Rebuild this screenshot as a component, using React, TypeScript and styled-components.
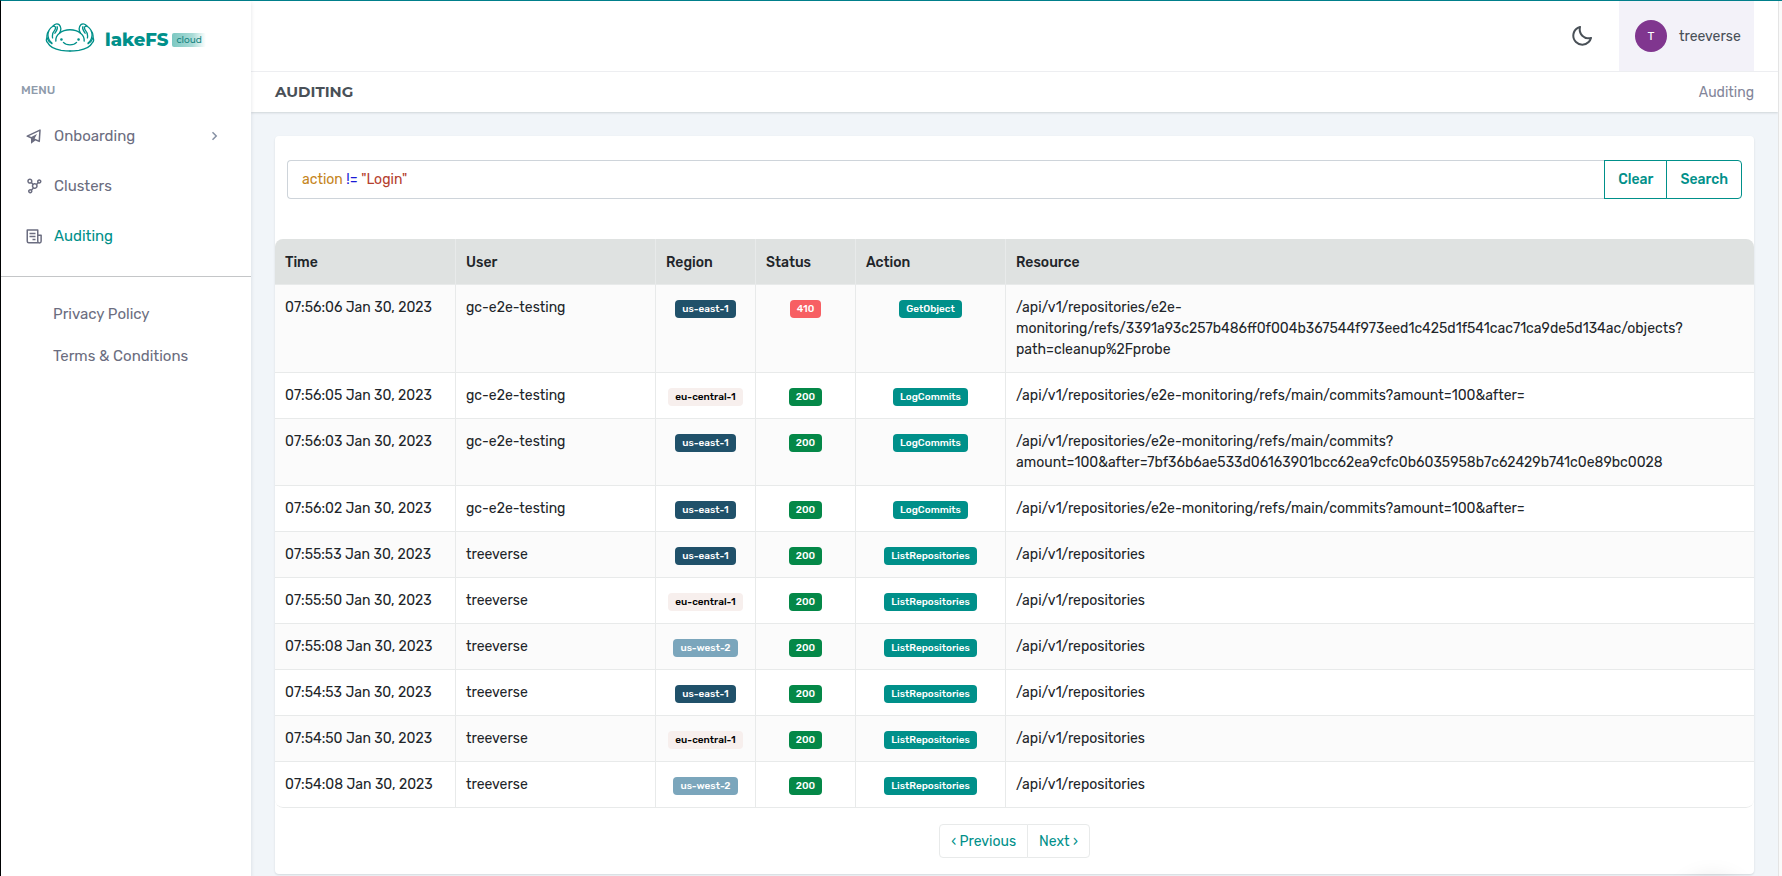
import React, { useState } from "react";
import styled, { createGlobalStyle } from "styled-components";
import { BiChevronRight, BiMoon, BiNetworkChart, BiPaperPlane } from "react-icons/bi";

const teal = "#00908a";
const line = "#e8eaea";
const bodyFont = `Rubik, Roboto, "Liberation Sans", sans-serif`;
const displayFont = `Montserrat, Inter, "Liberation Sans", sans-serif`;

const GlobalStyle = createGlobalStyle`
  *, *::before, *::after { box-sizing: border-box; }
  body {
    margin: 0;
    background: #f1f5f9;
    color: #212529;
    font: 400 14px/21px ${bodyFont};
  }
  button, input { font: inherit; }
  a { text-decoration: none; }
`;

const Shell = styled.div`
  display: grid;
  grid-template-columns: 250px minmax(0, 1fr) 4px;
  min-height: 100vh;
  border-top: 1px solid #007f8b;
  border-left: 1px solid #000;
`;

const Sidebar = styled.aside`
  position: relative;
  z-index: 1;
  background: #fff;
  box-shadow: 0 2px 4px rgba(15, 34, 58, 0.12);
`;

const Brand = styled.a`
  display: flex;
  align-items: center;
  height: 70px;
  padding: 2px 0 0 44px;
  color: ${teal};
`;

const BrandText = styled.span`
  display: flex;
  align-items: center;
  gap: 4px;
  padding: 5px 0 0 10px;
`;

const BrandName = styled.span`
  font: 800 18px/24px ${displayFont};
`;

const BrandTag = styled.span`
  padding: 0 4px;
  border-radius: 2px;
  background: linear-gradient(90deg, #7cc8c2, #a9dbd7 60%, #fff);
  color: #14837f;
  font: 500 9px/14px ${displayFont};
`;

const MenuTitle = styled.h2`
  margin: 0;
  padding: 9px 20px 11px;
  color: #8f9bab;
  font-size: 12px;
  font-weight: 500;
  line-height: 20px;
`;

const MenuList = styled.ul`
  margin: 0;
  padding: 0;
  list-style: none;
`;

const MenuLink = styled.a<{ $active?: boolean }>`
  display: grid;
  grid-template-columns: 18px 1fr 16px;
  column-gap: 11px;
  align-items: center;
  height: 50px;
  padding: 0 30px 0 24px;
  color: ${(p) => (p.$active ? teal : "#6b6d80")};
  font-size: 15px;

  svg { color: #6b6d80; }
  svg:last-child { color: #8792a5; }
  svg:first-child { color: #6b6d80; }
`;

const FootMenu = styled(MenuList)`
  margin-top: 15px;
  padding-top: 16px;
  border-top: 1px solid #c4c6c8;
`;

const FootLink = styled.a`
  display: block;
  padding: 11px 0 10px 52px;
  color: #6b6d80;
  font-size: 15px;
`;

const Column = styled.div`
  display: flex;
  flex-direction: column;
  min-width: 0;
`;

const Topbar = styled.header`
  display: flex;
  justify-content: flex-end;
  height: 71px;
  padding-right: 24px;
  border-bottom: 1px solid #f0f1f4;
  background: #fff;
`;

const ThemeButton = styled.button`
  display: flex;
  align-items: center;
  justify-content: center;
  width: 74px;
  padding: 0;
  border: 0;
  background: none;
  color: #495057;
`;

const UserButton = styled.button`
  display: flex;
  align-items: center;
  gap: 12px;
  width: 135px;
  padding: 0 16px;
  border: 0;
  background: #f3f2f9;
  color: #495057;
`;

const Avatar = styled.span`
  flex: none;
  width: 32px;
  border-radius: 50%;
  background: #80368f;
  color: #fff;
  font-size: 12px;
  line-height: 32px;
`;

const TitleBar = styled.div`
  display: flex;
  align-items: center;
  justify-content: space-between;
  height: 40px;
  padding: 0 24px;
  background: #fff;
  box-shadow: 0 1px 2px rgba(56, 65, 74, 0.18);
`;

const Title = styled.h1`
  margin: 0;
  color: #495057;
  font: 700 15px/20px ${displayFont};
`;

const Crumb = styled.span`
  color: #83869a;
`;

const Main = styled.main`
  padding: 24px 24px 2px;
`;

const Card = styled.section`
  border-radius: 4px;
  background: #fff;
  box-shadow: 0 1px 2px rgba(56, 65, 74, 0.15);
`;

const SearchForm = styled.form`
  display: flex;
  padding: 24px 12px 40px;
`;

const QueryBox = styled.div`
  position: relative;
  flex: 1;
  height: 39px;
  border: 1px solid #ced4da;
  border-right: 0;
  border-radius: 4px 0 0 4px;
`;

const QueryText = styled.div`
  position: absolute;
  inset: 0;
  padding: 0 14px;
  line-height: 37px;
  white-space: pre;
  pointer-events: none;
`;

const Token = styled.span<{ $kind: string }>`
  color: ${(p) =>
    ({ field: "#c5851b", operator: "#1a1ad6", string: "#b5402e" })[p.$kind] ?? "#212529"};
`;

const QueryInput = styled.input`
  display: block;
  width: 100%;
  height: 37px;
  padding: 0 14px;
  border: 0;
  outline: 0;
  background: none;
  color: transparent;
  caret-color: #212529;
`;

const FormButton = styled.button`
  height: 39px;
  padding: 0 13px;
  border: 1px solid ${teal};
  background: #fff;
  color: ${teal};
  font-weight: 500;

  & + & {
    margin-left: -1px;
    border-radius: 0 4px 4px 0;
  }
`;

const Table = styled.table`
  width: 100%;
  table-layout: fixed;
  border-collapse: separate;
  border-spacing: 0;
  border-radius: 8px;
  overflow: hidden;
`;

const Col = styled.col<{ $width?: number }>`
  width: ${(p) => (p.$width ? `${p.$width}px` : "auto")};
`;

const HeadCell = styled.th`
  padding: 13px 10px 11px;
  border-bottom: 1px solid ${line};
  background: #dfe2e1;
  font-weight: 500;
  text-align: left;

  & + & { border-left: 1px solid ${line}; }
`;

const Cell = styled.td`
  padding: 12px 9px 12px 10px;
  border-bottom: 1px solid ${line};
  vertical-align: top;
  overflow-wrap: anywhere;

  & + & { border-left: 1px solid ${line}; }
`;

const BadgeCell = styled(Cell)`
  padding: 15px 4px 9px;
  line-height: 18px;
`;

const Row = styled.tr`
  &:nth-child(odd) { background: #fbfbfb; }
  &:last-child ${Cell}:first-child { border-bottom-left-radius: 8px; }
  &:last-child ${Cell}:last-child { border-bottom-right-radius: 8px; }
`;

const tones: Record<string, string> = {
  "us-east-1": "#20516a",
  "eu-central-1": "#f7efed",
  "us-west-2": "#7ba6bc",
  "200": "#048848",
  "410": "#f75f63",
};

const Badge = styled.span<{ $tone: string }>`
  display: block;
  width: fit-content;
  margin: 0 auto;
  padding: 0 7px;
  border-radius: 4px;
  background: ${(p) => tones[p.$tone] ?? teal};
  color: ${(p) => (p.$tone === "eu-central-1" ? "#000" : "#fff")};
  font: 500 10px/18px ${bodyFont};
  white-space: nowrap;
`;

const Pager = styled.nav`
  display: flex;
  justify-content: center;
  padding: 16px 0;
`;

const PageButton = styled.button`
  height: 34px;
  padding: 0 11px;
  border: 1px solid ${line};
  border-radius: 4px 0 0 4px;
  background: #fff;
  color: ${teal};

  & + & {
    margin-left: -1px;
    border-radius: 0 4px 4px 0;
  }
`;

const ScrollTrack = styled.div`
  border-left: 1px solid #e4e4e4;
  background: #fafafa;
`;

const HelpGlow = styled.div`
  position: fixed;
  right: 42px;
  bottom: -64px;
  width: 56px;
  height: 56px;
  border-radius: 50%;
  box-shadow: 0 0 24px 4px rgba(0, 0, 0, 0.13);
`;

const gills = (
  <>
    <path d="M43 30C48 21 48 10 42 4C36 0 28 2 24 8C31 8 33 13 29 20C22 28 20 34 22 44" />
    <path d="M24 8C14 14 9 20 8 32C7 44 11 52 20 60" />
    <path d="M10 24C3 32 5 38 5 44C2 50 3 56 8 60C14 72 32 79 48 82C56 83 66 84 75 84" />
    <path d="M43 30C35 36 31 43 32 54" />
    <path d="M5 44C8 52 12 58 20 62" />
    <path d="M36 10C39 17 33 23 29 30" />
  </>
);

const AxolotlMark = () => (
  <svg width="50" height="29" viewBox="-1 -1 152 88" fill="none" stroke="currentColor" strokeWidth="4" strokeLinecap="round" aria-hidden="true">
    {gills}
    <g transform="matrix(-1 0 0 1 150 0)">{gills}</g>
    <path d="M43 30C60 16 90 16 107 30" />
    <path d="M55 58C64 68 86 68 95 58" />
    <circle cx="49" cy="49" r="2" fill="currentColor" />
    <circle cx="101" cy="49" r="2" fill="currentColor" />
  </svg>
);

const NewsIcon = () => (
  <svg width="18" height="18" viewBox="0 0 24 24" fill="none" stroke="currentColor" strokeWidth="2" strokeLinejoin="round" aria-hidden="true">
    <path d="M19 21H5a2 2 0 0 1-2-2V4h14v15a2 2 0 0 0 4.500 0v-8H17" />
    <path d="M6 8.500h8M6 12.500h8M10 16.500h4" />
  </svg>
);

const tokenKind = (part: string) => {
  if (/^"/.test(part)) return "string";
  if (/^[!=<>]+$/.test(part)) return "operator";
  return /^\w+$/.test(part) ? "field" : "plain";
};

const commits = "/api/v1/repositories/e2e-monitoring/refs/main/commits?";

const events = [
  ["07:56:06", "gc-e2e-testing", "us-east-1", "410", "GetObject", "/api/v1/repositories/e2e-monitoring/refs/3391a93c257b486ff0f004b367544f973eed1c425d1f541cac71ca9de5d134ac/objects?path=cleanup%2Fprobe"],
  ["07:56:05", "gc-e2e-testing", "eu-central-1", "200", "LogCommits", commits + "amount=100&after="],
  ["07:56:03", "gc-e2e-testing", "us-east-1", "200", "LogCommits", commits + "amount=100&after=7bf36b6ae533d06163901bcc62ea9cfc0b6035958b7c62429b741c0e89bc0028"],
  ["07:56:02", "gc-e2e-testing", "us-east-1", "200", "LogCommits", commits + "amount=100&after="],
  ["07:55:53", "treeverse", "us-east-1", "200", "ListRepositories", "/api/v1/repositories"],
  ["07:55:50", "treeverse", "eu-central-1", "200", "ListRepositories", "/api/v1/repositories"],
  ["07:55:08", "treeverse", "us-west-2", "200", "ListRepositories", "/api/v1/repositories"],
  ["07:54:53", "treeverse", "us-east-1", "200", "ListRepositories", "/api/v1/repositories"],
  ["07:54:50", "treeverse", "eu-central-1", "200", "ListRepositories", "/api/v1/repositories"],
  ["07:54:08", "treeverse", "us-west-2", "200", "ListRepositories", "/api/v1/repositories"],
];

export default function App() {
  const [query, setQuery] = useState('action != "Login"');

  return (
    <>
      <GlobalStyle />
      <Shell>
        <Sidebar>
          <Brand href="#home">
            <AxolotlMark />
            <BrandText>
              <BrandName>lakeFS</BrandName>
              <BrandTag>cloud</BrandTag>
            </BrandText>
          </Brand>
          <nav>
            <MenuTitle>MENU</MenuTitle>
            <MenuList>
              <li><MenuLink href="#onboarding"><BiPaperPlane size={18} /><span>Onboarding</span><BiChevronRight size={18} /></MenuLink></li>
              <li><MenuLink href="#clusters"><BiNetworkChart size={18} /><span>Clusters</span></MenuLink></li>
              <li><MenuLink href="#auditing" $active><NewsIcon /><span>Auditing</span></MenuLink></li>
            </MenuList>
            <FootMenu>
              <li><FootLink href="#privacy">Privacy Policy</FootLink></li>
              <li><FootLink href="#terms">Terms &amp; Conditions</FootLink></li>
            </FootMenu>
          </nav>
        </Sidebar>
        <Column>
          <Topbar>
            <ThemeButton type="button" aria-label="Dark mode"><BiMoon size={24} /></ThemeButton>
            <UserButton type="button"><Avatar>T</Avatar><span>treeverse</span></UserButton>
          </Topbar>
          <TitleBar>
            <Title>AUDITING</Title>
            <Crumb>Auditing</Crumb>
          </TitleBar>
          <Main>
            <Card>
              <SearchForm onSubmit={(e) => e.preventDefault()}>
                <QueryBox>
                  <QueryText aria-hidden="true">
                    {query.split(/("[^"]*"?|[!=<>]+|\s+)/).filter(Boolean).map((part, i) => (
                      <Token key={i} $kind={tokenKind(part)}>{part}</Token>
                    ))}
                  </QueryText>
                  <QueryInput aria-label="Filter query" spellCheck={false} value={query} onChange={(e) => setQuery(e.target.value)} />
                </QueryBox>
                <FormButton type="button" onClick={() => setQuery("")}>Clear</FormButton>
                <FormButton type="submit">Search</FormButton>
              </SearchForm>
              <Table>
                <colgroup>
                  <Col $width={180} />
                  <Col $width={200} />
                  <Col $width={100} />
                  <Col $width={100} />
                  <Col $width={150} />
                  <Col />
                </colgroup>
                <thead>
                  <tr>
                    {["Time", "User", "Region", "Status", "Action", "Resource"].map((h) => (
                      <HeadCell key={h} scope="col">{h}</HeadCell>
                    ))}
                  </tr>
                </thead>
                <tbody>
                  {events.map(([time, user, region, status, action, resource]) => (
                    <Row key={time}>
                      <Cell>{time} Jan 30, 2023</Cell>
                      <Cell>{user}</Cell>
                      <BadgeCell><Badge $tone={region}>{region}</Badge></BadgeCell>
                      <BadgeCell><Badge $tone={status}>{status}</Badge></BadgeCell>
                      <BadgeCell><Badge $tone={action}>{action}</Badge></BadgeCell>
                      <Cell>{resource}</Cell>
                    </Row>
                  ))}
                </tbody>
              </Table>
              <Pager aria-label="Pages">
                <PageButton type="button">‹ Previous</PageButton>
                <PageButton type="button">Next ›</PageButton>
              </Pager>
            </Card>
          </Main>
        </Column>
        <ScrollTrack />
      </Shell>
      <HelpGlow />
    </>
  );
}
